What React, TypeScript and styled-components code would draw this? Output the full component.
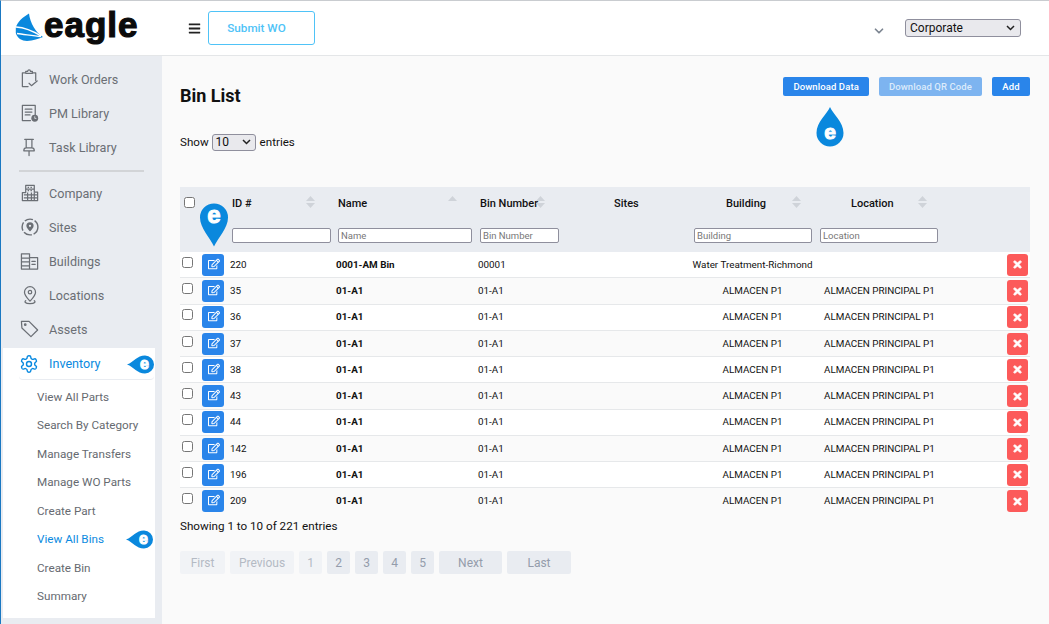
import styled, { createGlobalStyle } from "styled-components";
import { FaBars, FaTimes, FaRegEdit } from "react-icons/fa";
import { ChevronDown } from "lucide-react";
import type { ReactNode } from "react";

const Global = createGlobalStyle`
    html, body { margin: 0; padding: 0; }
    body {
        font-family: Roboto, "Liberation Sans", sans-serif;
        background: #fafafa;
        color: #111;
    }
    * { box-sizing: border-box; }
`;

const selectArrow = `url("data:image/svg+xml,%3Csvg xmlns='http://www.w3.org/2000/svg' width='9' height='6'%3E%3Cpath d='M1 1l3.500 3.500L8 1' fill='none' stroke='%23222' stroke-width='1.500'/%3E%3C/svg%3E")`;

const Page = styled.div`
    width: 1049px;
    height: 624px;
    overflow: hidden;
    border-top: 1px solid #c9ccd0;
    border-left: 1px solid #1a78c2;
    display: flex;
    flex-direction: column;
`;

const Header = styled.header`
    height: 55px;
    flex: none;
    background: #fff;
    border-bottom: 1px solid #e4e6e8;
    display: flex;
    align-items: center;
    padding: 0 28px 0 14px;
`;

const Logo = styled.div`
    display: flex;
    align-items: center;
    width: 173px;
    flex: none;
`;

const LogoMark = styled.svg`
    flex: none;
    width: 29px;
    height: 29px;
    margin-top: -2px;
`;

const LogoText = styled.span`
    font-family: "Liberation Sans", sans-serif;
    font-weight: 700;
    font-size: 35px;
    line-height: 40px;
    letter-spacing: 1px;
    color: #0b0b0b;
    -webkit-text-stroke: 1.2px #0b0b0b;
    margin-top: -6px;
`;

const MenuToggle = styled.span`
    display: flex;
    font-size: 13px;
    color: #222;
    width: 20px;
    flex: none;
`;

const SubmitButton = styled.button`
    width: 107px;
    height: 34px;
    background: #fff;
    border: 1px solid #4fc3f7;
    border-radius: 3px;
    color: #4fc3f7;
    font: 500 11.7px Roboto, sans-serif;
    padding: 0 10px 0 0;
`;

const HeaderRight = styled.div`
    margin-left: auto;
    display: flex;
    align-items: center;
    gap: 19px;
    color: #7c8591;
`;

const HeaderChevron = styled(ChevronDown)`
    margin-top: 5px;
`;

const CorpSelect = styled.select`
    appearance: none;
    width: 116px;
    height: 18px;
    font: 12px Roboto, sans-serif;
    color: #111;
    padding: 0 0 0 4px;
    background: #e9e9ed ${selectArrow} no-repeat right 5px center;
    border: 1px solid #8f8f9d;
    border-radius: 3px;
    margin-bottom: 1px;
`;

const Body = styled.div`
    flex: 1;
    display: flex;
    min-height: 0;
`;

const Sidebar = styled.nav`
    width: 161px;
    flex: none;
    background: #e9ecf1;
    padding-top: 6px;
`;

const NavItem = styled.a`
    display: flex;
    align-items: center;
    height: 34px;
    padding-left: 19px;
    gap: 9px;
    font-size: 12.6px;
    color: #6b6f75;
`;

const NavIcon = styled.svg`
    flex: none;
    width: 20px;
    height: 20px;
`;

const Divider = styled.hr`
    border: 0;
    height: 2px;
    background: #d2d4d7;
    margin: 6px 18px 4px 18px;
`;

const InventoryPanel = styled.div`
    background: #fff;
    width: 152px;
    margin: 2px 0 0 2px;
    padding-bottom: 7px;
`;

const ActiveRow = styled.div`
    position: relative;
    margin-left: 16px;
    margin-right: 1px;
    height: 32px;
    border-bottom: 1px solid #e9ecf1;
    border-radius: 0 0 4px 4px;
    display: flex;
    align-items: center;
    gap: 10px;
    font-size: 12.6px;
    color: #0a8ae0;
    margin-bottom: 2.6px;
`;

const SubItem = styled.a<{ $active?: boolean }>`
    display: flex;
    align-items: center;
    height: 28.5px;
    padding-left: 34px;
    font-size: 11.7px;
    color: ${(p) => (p.$active ? "#0a8ae0" : "#666a70")};
    position: relative;
`;

const SideTag = styled.svg<{ $top: number; $right: number }>`
    position: absolute;
    top: ${(p) => p.$top}px;
    right: ${(p) => p.$right}px;
    width: 27px;
    height: 19px;
`;

const Main = styled.main`
    flex: 1;
    padding: 21px 19px 0 18px;
    position: relative;
    min-width: 0;
`;

const TitleRow = styled.div`
    display: flex;
    justify-content: space-between;
    align-items: flex-start;
    height: 39px;
`;

const Title = styled.h1`
    margin: 9px 0 0;
    font-size: 18px;
    line-height: 20px;
    font-weight: 700;
    color: #111;
`;

const Actions = styled.div`
    display: flex;
    gap: 10px;
`;

const ActionButton = styled.button<{ $faded?: boolean }>`
    height: 19px;
    padding: 0 10px;
    border: 0;
    border-radius: 2px;
    background: ${(p) => (p.$faded ? "#7db4f0" : "#2a85ea")};
    color: ${(p) => (p.$faded ? "#dcebfb" : "#fff")};
    font: 500 9.5px Roboto, sans-serif;
    letter-spacing: 0.1px;
`;

const AddButton = styled(ActionButton)`
    width: 38px;
    padding: 0;
`;

const Entries = styled.div`
    margin-top: 17px;
    display: flex;
    align-items: center;
    gap: 3px;
    font-size: 11.6px;
    height: 18px;
`;

const SmallSelect = styled.select`
    appearance: none;
    width: 44px;
    height: 17px;
    font: 12px Roboto, sans-serif;
    padding: 0 0 0 3px;
    background: #e9e9ed ${selectArrow} no-repeat right 4px center;
    border: 1px solid #8f8f9d;
    border-radius: 3px;
    color: #111;
    margin: 0 1px 0 0;
`;

const Table = styled.table`
    margin-top: 36px;
    width: 850px;
    border-collapse: collapse;
    table-layout: fixed;
    font-size: 9.85px;
`;

const HeadRow = styled.tr`
    background: #e9ecf1;
    height: 39px;
`;

const FilterRow = styled.tr`
    background: #e9ecf1;
    height: 25.65px;
`;

const Th = styled.th<{ $pad?: number }>`
    font-weight: 500;
    font-size: 11px;
    text-align: left;
    padding: 0 0 6px ${(p) => p.$pad ?? 0}px;
    color: #111;
    position: relative;
`;

const SortMark = styled.svg<{ $x: number }>`
    position: absolute;
    left: ${(p) => p.$x}px;
    top: 8px;
    width: 9px;
    height: 14px;
`;

const FilterCell = styled.td<{ $pad?: number }>`
    padding: 0 0 7px ${(p) => p.$pad ?? 0}px;
    vertical-align: middle;
`;

const FilterInput = styled.input<{ $w: number }>`
    display: block;
    width: ${(p) => p.$w}px;
    height: 15px;
    border: 1px solid #8f8f9d;
    border-radius: 2px;
    background: #fff;
    padding: 0 2px;
    font: 9.5px Roboto, sans-serif;
    &::placeholder { color: #777; }
`;

const Row = styled.tr<{ $odd: boolean }>`
    height: 26.25px;
    background: ${(p) => (p.$odd ? "#fff" : "transparent")};
    border-bottom: 1px solid #e6e8ea;
    &:last-child { border-bottom: 0; }
`;

const Cell = styled.td<{ $bold?: boolean; $pad?: number }>`
    padding: 0 0 0 ${(p) => p.$pad ?? 0}px;
    font-weight: ${(p) => (p.$bold ? 700 : 400)};
    white-space: nowrap;
    color: #111;
    line-height: 1;
`;

const BuildingCell = styled(Cell)`
    text-align: center;
    padding-right: 5px;
`;

const Check = styled.input`
    display: block;
    width: 11px;
    height: 11px;
    margin: 0;
`;

const RowCheck = styled(Check)`
    margin: -5px 0 0 2px;
`;

const HeadCheck = styled(Check)`
    margin: -2px 0 0 4px;
`;

const IconButton = styled.button`
    display: flex;
    align-items: center;
    justify-content: center;
    width: 22px;
    height: 22px;
    padding: 0 0 2px 1px;
    border: 0;
    border-radius: 3px;
    background: #2a85ea;
    color: #fff;
    font-size: 12px;
`;

const DeleteButton = styled(IconButton)`
    width: 21px;
    padding: 0;
    background: #fc5a5a;
    font-size: 11px;
    svg { stroke: #fff; stroke-width: 40px; }
`;

const Footer = styled.div`
    margin-top: 4px;
    font-size: 11.65px;
    line-height: 16px;
`;

const Pager = styled.div`
    display: flex;
    gap: 5px;
    margin-top: 17px;
`;

const PageButton = styled.span<{ $w: number; $off?: boolean }>`
    display: flex;
    align-items: center;
    justify-content: center;
    width: ${(p) => p.$w}px;
    height: 23px;
    border-radius: 2px;
    font-size: 12px;
    background: ${(p) => (p.$off ? "#f1f3f6" : "#e9ecf1")};
    color: ${(p) => (p.$off ? "#b4bac4" : "#949cab")};
`;

const Pin = styled.svg`
    position: absolute;
    left: 37px;
    top: 147px;
    width: 30px;
    height: 44px;
    overflow: visible;
    z-index: 2;
`;

const Drop = styled.svg`
    position: absolute;
    left: 653px;
    top: 50px;
    width: 30px;
    height: 41px;
    overflow: visible;
`;

const BLUE = "#0a88dd";

function Glyph({ x, y, size }: { x: number; y: number; size: number }) {
    return (
        <text x={x} y={y} fontFamily="Liberation Sans, sans-serif" fontWeight="700" fontSize={size} fill="#fff" stroke="#fff" strokeWidth="1" textAnchor="middle">
            e
        </text>
    );
}

function Tag({ top, right }: { top: number; right: number }) {
    return (
        <SideTag $top={top} $right={right} viewBox="0 0 27 19">
            <path d="M0 9.500 C7 7 10 0.500 18 0.500 a9 9 0 0 1 0 18 C10 18.500 7 12 0 9.500Z" fill={BLUE} />
            <Glyph x={17.5} y={14} size={16} />
        </SideTag>
    );
}

const S = { fill: "none", stroke: "currentColor", strokeWidth: 1.3, strokeLinecap: "round" as const, strokeLinejoin: "round" as const };

const navIcons: Record<string, ReactNode> = {
    "Work Orders": (
        <g {...S}>
            <path d="M5 4H2.500v14.500h6M13 4h3.500v8" />
            <path d="M6 4.500V2.500h2a1.500 1.500 0 0 1 3 0h2v2z" />
            <path d="M9.500 15l2.500 2.500 6-5" />
        </g>
    ),
    "PM Library": (
        <g>
            <path {...S} d="M11 18.500H2.500v-16h13.500v10" />
            <path {...S} d="M5.500 6.500h7M5.500 9.500h7M5.500 12.500h5" />
            <circle cx="15.500" cy="16" r="3.600" fill="currentColor" />
            <path d="M15.500 14v2.200h1.700" stroke="#e9ecf1" strokeWidth="0.8" fill="none" />
        </g>
    ),
    "Task Library": (
        <g {...S}>
            <path d="M5 2.500h9M6.500 2.500v9M12.500 2.500v9M4 14.500c0-2 1.500-3 2.500-3h6c1 0 2.500 1 2.500 3zM9.500 14.500v5" />
        </g>
    ),
    Company: (
        <g>
            <path {...S} d="M6 6.500V2.500h9v7M2.500 18.500V10H6V6.500h9V9.500h3.500v9z" />
            <path d="M8 4.500h1.500M11 4.500h1.500M8 8h1.500M11 8h1.500M4 12.500h14M4 15.500h14M8 10v8M12 10v8M15 10v8" stroke="currentColor" strokeWidth="1.300" fill="none" />
        </g>
    ),
    Sites: (
        <g>
            <circle cx="10.500" cy="10.500" r="8.300" fill="none" stroke="currentColor" strokeWidth="1.500" strokeDasharray="9 2" />
            <path d="M10.500 5.500a3.800 3.800 0 0 1 3.800 3.800c0 2.500-3.800 6-3.800 6s-3.800-3.500-3.800-6a3.800 3.800 0 0 1 3.800-3.800z" fill="currentColor" />
            <circle cx="10.500" cy="9.300" r="1.200" fill="#e9ecf1" />
        </g>
    ),
    Buildings: (
        <g {...S}>
            <path d="M1.500 3h8.500v16H1.500zM1.500 7.500H10M1.500 11.500H10M1.500 15.500H10M10 7h8.500v12H10M12.500 11h3.500M12.500 14h3.500" />
        </g>
    ),
    Locations: (
        <g {...S}>
            <path d="M10.500 1.800a5.800 5.800 0 0 1 5.800 5.800c0 3.400-3.600 7-5.800 9.400-2.200-2.400-5.800-6-5.800-9.400a5.800 5.800 0 0 1 5.800-5.800z" />
            <circle cx="10.500" cy="7.500" r="1.800" />
            <path d="M6 16.500c-1.500 1-1 3 4.500 3s6-2 4.500-3" />
        </g>
    ),
    Assets: (
        <g {...S}>
            <path d="M1.500 2.500h8l9 9-7 7-9.500-9z" />
            <circle cx="5.500" cy="6" r="0.800" />
        </g>
    ),
};

const topNav = ["Work Orders", "PM Library", "Task Library"];
const midNav = ["Company", "Sites", "Buildings", "Locations", "Assets"];
const subNav = ["View All Parts", "Search By Category", "Manage Transfers", "Manage WO Parts", "Create Part", "View All Bins", "Create Bin", "Summary"];

const rows = [
    { id: "220", name: "0001-AM Bin", bin: "00001", building: "Water Treatment-Richmond", location: "" },
    ...["35", "36", "37", "38", "43", "44", "142", "196", "209"].map((id) => ({
        id,
        name: "01-A1",
        bin: "01-A1",
        building: "ALMACEN P1",
        location: "ALMACEN PRINCIPAL P1",
    })),
];

function Sort({ x, upOnly }: { x: number; upOnly?: boolean }) {
    return (
        <SortMark $x={x} viewBox="0 0 9 14">
            <path d="M4.500 1L9 6H0z" fill="#cfd3d9" />
            {!upOnly && <path d="M4.500 13L9 8H0z" fill="#cfd3d9" />}
        </SortMark>
    );
}

function App() {
    return (
        <Page>
            <Global />
            <Header>
                <Logo>
                    <LogoMark viewBox="0 0 29 29">
                        <path d="M14 0.500C8 4 2 9 0.800 15V20C2 25 7 28 12 28C18 27.500 24 25.500 28 24C21 20 15 10 14 0.500Z" fill={BLUE} />
                        <path d="M1 14C9 14.500 18 18 26 23M2 20.500C9 21.500 18 22.500 26 23.700" stroke="#fff" strokeWidth="1.300" fill="none" />
                    </LogoMark>
                    <LogoText>eagle</LogoText>
                </Logo>
                <MenuToggle><FaBars /></MenuToggle>
                <SubmitButton>Submit WO</SubmitButton>
                <HeaderRight>
                    <HeaderChevron size={14} strokeWidth={3} />
                    <CorpSelect defaultValue="Corporate">
                        <option>Corporate</option>
                    </CorpSelect>
                </HeaderRight>
            </Header>
            <Body>
                <Sidebar>
                    {topNav.map((n) => (
                        <NavItem key={n}>
                            <NavIcon viewBox="0 0 21 21">{navIcons[n]}</NavIcon>
                            {n}
                        </NavItem>
                    ))}
                    <Divider />
                    {midNav.map((n) => (
                        <NavItem key={n}>
                            <NavIcon viewBox="0 0 21 21">{navIcons[n]}</NavIcon>
                            {n}
                        </NavItem>
                    ))}
                    <InventoryPanel>
                        <ActiveRow>
                            <NavIcon viewBox="0 0 24 24" fill="none" stroke="currentColor" strokeWidth="1.700" strokeLinecap="round" strokeLinejoin="round">
                                <path d="M12.200 2h-.4a2 2 0 0 0-2 2v.2a2 2 0 0 1-1 1.700l-.4.300a2 2 0 0 1-2 0l-.2-.1a2 2 0 0 0-2.700.7l-.2.400a2 2 0 0 0 .7 2.700l.2.100a2 2 0 0 1 1 1.700v.5a2 2 0 0 1-1 1.700l-.2.100a2 2 0 0 0-.7 2.700l.2.400a2 2 0 0 0 2.700.7l.2-.1a2 2 0 0 1 2 0l.4.300a2 2 0 0 1 1 1.700v.2a2 2 0 0 0 2 2h.4a2 2 0 0 0 2-2v-.2a2 2 0 0 1 1-1.700l.4-.3a2 2 0 0 1 2 0l.2.100a2 2 0 0 0 2.700-.7l.2-.400a2 2 0 0 0-.7-2.700l-.2-.100a2 2 0 0 1-1-1.700v-.5a2 2 0 0 1 1-1.700l.2-.100a2 2 0 0 0 .7-2.700l-.2-.400a2 2 0 0 0-2.700-.7l-.2.100a2 2 0 0 1-2 0l-.4-.300a2 2 0 0 1-1-1.700V4a2 2 0 0 0-2-2z" />
                                <circle cx="12" cy="12" r="3" />
                            </NavIcon>
                            Inventory
                            <Tag top={7} right={0} />
                        </ActiveRow>
                        {subNav.map((n) => (
                            <SubItem key={n} $active={n === "View All Bins"}>
                                {n}
                                {n === "View All Bins" && <Tag top={5} right={2} />}
                            </SubItem>
                        ))}
                    </InventoryPanel>
                </Sidebar>
                <Main>
                    <TitleRow>
                        <Title>Bin List</Title>
                        <Actions>
                            <ActionButton>Download Data</ActionButton>
                            <ActionButton $faded>Download QR Code</ActionButton>
                            <AddButton>Add</AddButton>
                        </Actions>
                    </TitleRow>
                    <Drop viewBox="0 0 30 41">
                        <path d="M15 1C18 8 28.500 16 28.500 27a13.500 13.500 0 0 1-27 0C1.500 16 12 8 15 1z" fill={BLUE} />
                        <Glyph x={15} y={33} size={21} />
                    </Drop>
                    <Pin viewBox="0 0 30 44">
                        <path d="M15 43.500C11 35 1 25 1 14.500a14 14 0 0 1 28 0C29 25 19 35 15 43.500z" fill={BLUE} />
                        <Glyph x={15} y={20} size={24} />
                    </Pin>
                    <Entries>
                        Show
                        <SmallSelect defaultValue="10">
                            <option>10</option>
                        </SmallSelect>
                        entries
                    </Entries>
                    <Table>
                        <colgroup>
                            <col style={{ width: 22 }} />
                            <col style={{ width: 26 }} />
                            <col style={{ width: 106 }} />
                            <col style={{ width: 142 }} />
                            <col style={{ width: 136 }} />
                            <col style={{ width: 80 }} />
                            <col style={{ width: 126 }} />
                            <col style={{ width: 186 }} />
                            <col style={{ width: 26 }} />
                        </colgroup>
                        <thead>
                            <HeadRow>
                                <Th><HeadCheck type="checkbox" /></Th>
                                <Th />
                                <Th $pad={4}>ID #<Sort x={78} /></Th>
                                <Th $pad={4}>Name<Sort x={114} upOnly /></Th>
                                <Th $pad={4}>Bin Number<Sort x={60} /></Th>
                                <Th $pad={2}>Sites</Th>
                                <Th $pad={34}>Building<Sort x={100} /></Th>
                                <Th $pad={33}>Location<Sort x={100} /></Th>
                                <Th />
                            </HeadRow>
                            <FilterRow>
                                <FilterCell />
                                <FilterCell />
                                <FilterCell $pad={4}><FilterInput $w={99} /></FilterCell>
                                <FilterCell $pad={4}><FilterInput $w={134} placeholder="Name" /></FilterCell>
                                <FilterCell $pad={4}><FilterInput $w={79} placeholder="Bin Number" /></FilterCell>
                                <FilterCell />
                                <FilterCell $pad={2}><FilterInput $w={118} placeholder="Building" /></FilterCell>
                                <FilterCell $pad={2}><FilterInput $w={118} placeholder="Location" /></FilterCell>
                                <FilterCell />
                            </FilterRow>
                        </thead>
                        <tbody>
                            {rows.map((r, i) => (
                                <Row key={r.id} $odd={i % 2 === 0}>
                                    <Cell><RowCheck type="checkbox" /></Cell>
                                    <Cell><IconButton><FaRegEdit /></IconButton></Cell>
                                    <Cell $pad={2}>{r.id}</Cell>
                                    <Cell $pad={2} $bold>{r.name}</Cell>
                                    <Cell $pad={2}>{r.bin}</Cell>
                                    <Cell />
                                    <BuildingCell>{r.building}</BuildingCell>
                                    <Cell $pad={6}>{r.location}</Cell>
                                    <Cell $pad={3}><DeleteButton><FaTimes /></DeleteButton></Cell>
                                </Row>
                            ))}
                        </tbody>
                    </Table>
                    <Footer>Showing 1 to 10 of 221 entries</Footer>
                    <Pager>
                        <PageButton $w={45} $off>First</PageButton>
                        <PageButton $w={64} $off>Previous</PageButton>
                        <PageButton $w={23} $off>1</PageButton>
                        <PageButton $w={23}>2</PageButton>
                        <PageButton $w={23}>3</PageButton>
                        <PageButton $w={23}>4</PageButton>
                        <PageButton $w={23}>5</PageButton>
                        <PageButton $w={63}>Next</PageButton>
                        <PageButton $w={64}>Last</PageButton>
                    </Pager>
                </Main>
            </Body>
        </Page>
    );
}

export default App;
